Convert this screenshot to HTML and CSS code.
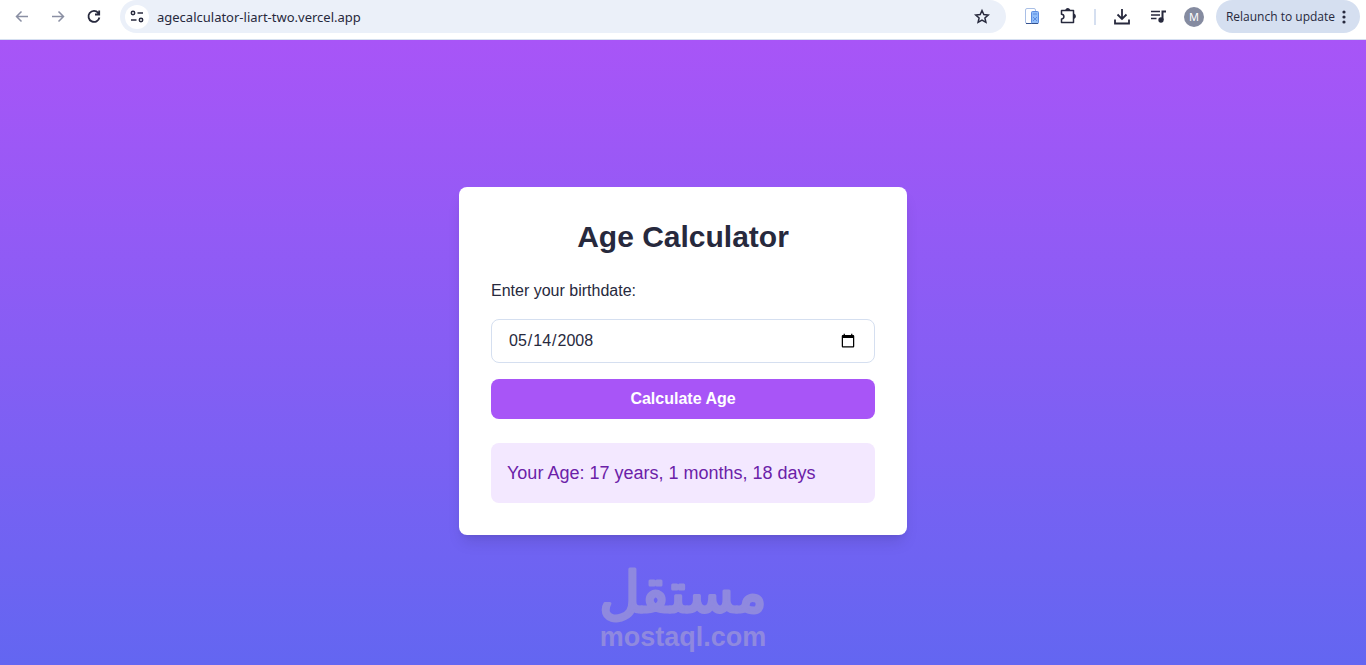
FILE: index.html
```html
<!DOCTYPE html>
<html lang="en">

<head>
    <meta charset="UTF-8">
    <meta name="viewport" content="width=device-width, initial-scale=1.0">
    <title>Age Calculator</title>
    <link rel="stylesheet" href="styles.css">
</head>

<body>
    <!-- browser toolbar -->
    <header class="toolbar">
        <button class="tool faded" type="button" aria-label="Back">
            <svg viewBox="0 0 20 20"><path d="M16 9.500H5M9.500 4.500L4.500 9.500L9.500 14.500"/></svg>
        </button>
        <button class="tool faded" type="button" aria-label="Forward">
            <svg viewBox="0 0 20 20"><path d="M4 9.500H15M10.500 4.500L15.500 9.500L10.500 14.500"/></svg>
        </button>
        <button class="tool" type="button" aria-label="Reload">
            <svg class="bold" viewBox="0 0 20 20"><path d="M14.300 6A5.500 5.500 0 1 0 15.400 10.500M15.200 3.500V7.500H11"/></svg>
        </button>

        <div class="address">
            <button class="site-info" type="button" aria-label="Site information">
                <svg viewBox="0 0 20 20">
                    <circle cx="6" cy="6" r="1.700"/>
                    <path d="M10.500 6H16M4 13H9.500"/>
                    <circle cx="14" cy="13" r="1.700"/>
                </svg>
            </button>
            <input class="url" type="text" aria-label="Address" value="agecalculator-liart-two.vercel.app">
            <button class="tool" type="button" aria-label="Bookmark">
                <svg viewBox="0 0 20 20"><path d="M10 3.500L11.800 7.600L16.200 8L12.900 10.900L13.900 15.300L10 13L6.100 15.300L7.100 10.900L3.800 8L8.200 7.600Z"/></svg>
            </button>
        </div>

        <button class="tool" type="button" aria-label="Translate extension">
            <svg viewBox="0 0 20 20">
                <rect x="3.500" y="1.500" width="10" height="15" rx="1.500" fill="#fff" stroke="#a9bfe6" stroke-width="1"/>
                <path d="M4 16.500H10" stroke="#33518f" stroke-width="1"/>
                <rect x="9.500" y="4.500" width="7" height="12" rx="1" fill="#8fbcf8" stroke="#5c8be0" stroke-width="1"/>
                <path d="M10 16.500H16" stroke="#33518f" stroke-width="1"/>
                <path d="M11 7H15M11 10L15 14M15 10L11 14" stroke="#5c8be0" stroke-width="1"/>
            </svg>
        </button>
        <button class="tool" type="button" aria-label="Extensions">
            <svg viewBox="0 0 20 20">
                <path d="M3.500 3.500H15.500V15.500H3.500V12A2.400 2.400 0 0 0 3.500 7.200Z" stroke-linejoin="round"/>
                <path d="M8 3A1.900 1.900 0 0 1 11.500 3ZM16 7.500A1.900 1.900 0 0 1 16 11Z" fill="#27293d"/>
            </svg>
        </button>
        <span class="divider"></span>
        <button class="tool" type="button" aria-label="Downloads">
            <svg class="bold" viewBox="0 0 20 20"><path d="M10 2V11.500M5.500 7.500L10 12L14.500 7.500M3 12.500V16.500H17V12.500"/></svg>
        </button>
        <button class="tool" type="button" aria-label="Media controls">
            <svg viewBox="0 0 20 20">
                <path d="M3 4.500H12M3 8H12M3 11.500H8.500"/>
                <path class="note" d="M14.500 13V4.500H18"/>
                <circle cx="13" cy="13" r="1.900" fill="#27293d"/>
            </svg>
        </button>
        <button class="avatar" type="button">M</button>
        <button class="update" type="button">
            <span>Relaunch to update</span>
            <svg viewBox="0 0 4 16">
                <circle cx="2" cy="3" r="1.600"/>
                <circle cx="2" cy="8" r="1.600"/>
                <circle cx="2" cy="13" r="1.600"/>
            </svg>
        </button>
    </header>

    <main class="page">
        <div class="card">
            <h1 class="title">Age Calculator</h1>
            <form class="form">
                <label class="label" for="birthdate">Enter your birthdate:</label>
                <input class="date" id="birthdate" type="date" value="2008-05-14">
                <button class="submit" type="button">Calculate Age</button>
            </form>
            <p class="result">Your Age: 17 years, 1 months, 18 days</p>
        </div>

        <!-- watermark -->
        <div class="watermark">
            <svg class="mark-ar" viewBox="0 0 180 52">
                <text x="90" y="43" text-anchor="middle" lang="ar">مستقل</text>
            </svg>
            <span class="mark-en">mostaql.com</span>
        </div>
    </main>
</body>

</html>
```

FILE: styles.css
```css
* {
    box-sizing: border-box;
}

body,
h1,
p {
    margin: 0;
}

body {
    display: flex;
    flex-direction: column;
    min-height: 100vh;
    font-family: "Liberation Sans", Arial, sans-serif;
    font-size: 16px;
    line-height: 24px;
    color: #27293d;
}

button,
input {
    margin: 0;
    padding: 0;
    border: 0;
    background: none;
    color: inherit;
    font-family: inherit;
}

button {
    cursor: pointer;
}

svg {
    display: block;
    width: 20px;
    height: 20px;
    fill: none;
    stroke: #27293d;
    stroke-width: 1.5;
}

svg.bold {
    stroke-width: 1.8;
}

.note {
    stroke-width: 2;
}

/* toolbar */
.toolbar {
    display: flex;
    align-items: center;
    gap: 16px;
    height: 40px;
    padding: 0 6px 6px 12px;
    background: #fff;
    border-bottom: 1px solid #d5dff0;
    font-family: "Noto Sans", "Open Sans", sans-serif;
}

.tool {
    flex: none;
    width: 20px;
    height: 20px;
}

.faded svg {
    stroke: #8a8fa3;
}

.address {
    display: flex;
    flex: 1;
    align-items: center;
    height: 33px;
    padding: 0 14px 0 5px;
    border-radius: 17px;
    background: #ebf0f9;
}

.site-info {
    flex: none;
    padding: 2px;
    border-radius: 50%;
    background: #fff;
}

.url {
    flex: 1;
    min-width: 0;
    padding: 0 8px;
    font-size: 13px;
    outline: none;
}

.divider {
    width: 2px;
    height: 16px;
    background: #d5dff0;
}

.avatar {
    flex: none;
    width: 20px;
    height: 20px;
    border-radius: 50%;
    background: #858ba0;
    color: #fff;
    font-size: 11px;
    line-height: 20px;
}

.update {
    display: flex;
    align-items: center;
    justify-content: space-between;
    gap: 7px;
    height: 33px;
    margin-left: -4px;
    padding: 0 14px 0 10px;
    border-radius: 17px;
    background: #d5dff0;
    font-family: "Open Sans", "Noto Sans", sans-serif;
    font-size: 12px;
}

.update svg {
    width: 4px;
    height: 16px;
    fill: #27293d;
    stroke: none;
}

/* page */
.page {
    position: relative;
    display: flex;
    flex: 1;
    align-items: center;
    justify-content: center;
    padding: 32px 16px 16px;
    background: linear-gradient(to bottom, #a855f7, #6366f1);
}

.card {
    width: 100%;
    max-width: 448px;
    padding: 32px;
    border-radius: 8px;
    background: #fff;
    box-shadow: 0 10px 15px -3px rgba(0, 0, 0, 0.1), 0 4px 6px -4px rgba(0, 0, 0, 0.1);
}

.title {
    margin-bottom: 24px;
    font-size: 30px;
    line-height: 36px;
    text-align: center;
}

.form {
    display: flex;
    flex-direction: column;
    gap: 16px;
}

.date {
    height: 44px;
    padding: 8px 16px;
    border: 1px solid #d5dff0;
    border-radius: 8px;
    font-size: 16px;
}

.submit {
    height: 40px;
    border-radius: 8px;
    background: #a855f7;
    color: #fff;
    font-size: 16px;
    font-weight: bold;
}

.result {
    margin-top: 24px;
    padding: 16px;
    border-radius: 8px;
    background: #f3e8ff;
    color: #6b21a8;
    font-size: 18px;
    line-height: 28px;
}

/* watermark lies over the page background */
.watermark {
    position: absolute;
    bottom: 12px;
    left: 0;
    right: 0;
    display: flex;
    flex-direction: column;
    align-items: center;
    color: #8f89df;
    pointer-events: none;
}

.mark-ar {
    width: 180px;
    height: 52px;
    overflow: visible;
    fill: #8f89df;
    stroke: #8f89df;
    stroke-width: 3;
    stroke-linejoin: round;
    font-family: "DejaVu Sans", sans-serif;
    font-size: 56px;
}

.mark-en {
    font-size: 27px;
    font-weight: bold;
    line-height: 32px;
}
```
